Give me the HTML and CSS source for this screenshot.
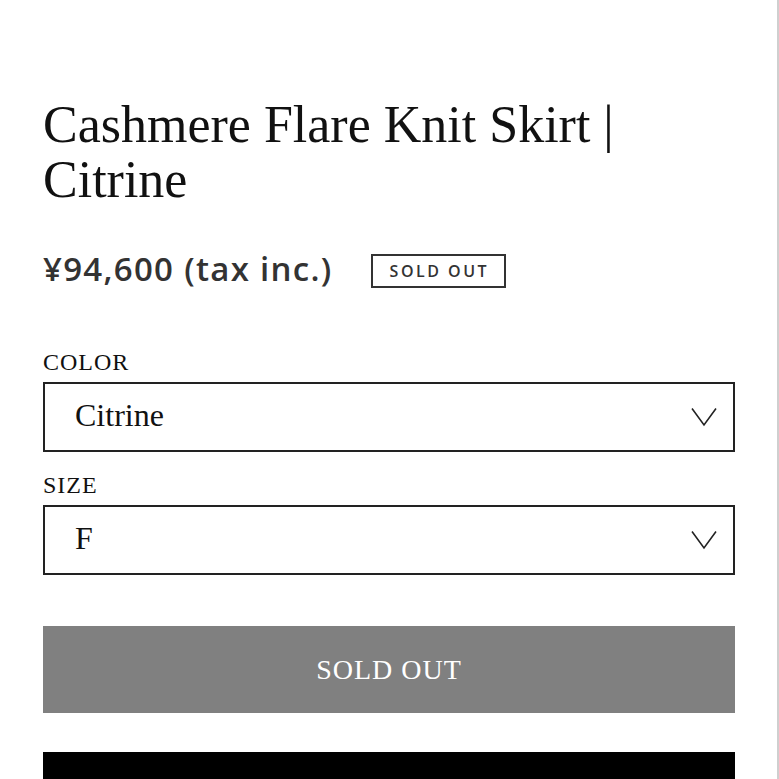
FILE: index.html
```html
<!DOCTYPE html>
<html lang="en">
<head>
  <meta charset="UTF-8" />
  <meta name="viewport" content="width=device-width, initial-scale=1.0" />
  <title>Cashmere Flare Knit Skirt | Citrine</title>
  <link rel="stylesheet" href="styles.css">
</head>
<body>
  <div class="page">
    <!-- Nome e preço -->
    <h1 class="product-title">Cashmere Flare Knit Skirt | Citrine</h1>
    <div class="price-row">
      <span class="price">¥94,600 (tax inc.)</span>
      <span class="badge">SOLD OUT</span>
    </div>

    <!-- Variações -->
    <div class="option">
      <label class="option-label">COLOR</label>
      <div class="select">
        <span class="select-value">Citrine</span>
        <svg class="chevron" width="26" height="20" viewBox="0 0 26 20"><polyline points="1,1.5 13,18 25,1.5" fill="none" stroke="#222" stroke-width="1.6"/></svg>
      </div>
    </div>
    <div class="option">
      <label class="option-label">SIZE</label>
      <div class="select">
        <span class="select-value">F</span>
        <svg class="chevron" width="26" height="20" viewBox="0 0 26 20"><polyline points="1,1.5 13,18 25,1.5" fill="none" stroke="#222" stroke-width="1.6"/></svg>
      </div>
    </div>

    <!-- Botões -->
    <button class="btn-soldout" disabled>SOLD OUT</button>
    <div class="btn-black"></div>
  </div>
</body>
</html>
```

FILE: styles.css
```css
:root {
  --text: #111;
  --muted: #333;
  --border: #222;
  --gray-button: #808080;
  --edge: #cfcfcf;
}
* { margin: 0; padding: 0; box-sizing: border-box; }
html, body { height: 100%; overflow: hidden; }
body {
  background: #fff;
  color: var(--text);
  font-family: "Liberation Serif", "Times New Roman", serif;
}
.page {
  min-height: 100%;
  border-right: 2px solid var(--edge);
  padding: 97px 42px 0 43px;
}
.product-title {
  font-size: 52px;
  font-weight: 400;
  line-height: 55px;
  padding-right: 100px;
}
.price-row {
  display: flex;
  align-items: center;
  gap: 38px;
  margin-top: 42px;
}
.price {
  font-family: "Open Sans", sans-serif;
  font-size: 33px;
  font-weight: 600;
  line-height: 40px;
  letter-spacing: 1.3px;
  color: var(--muted);
}
.badge {
  font-family: "Open Sans", sans-serif;
  font-size: 16px;
  font-weight: 600;
  letter-spacing: 2.5px;
  line-height: 30px;
  color: var(--muted);
  border: 2px solid var(--muted);
  padding: 0 15px 0 17px;
  margin-top: 4px;
}
.option { margin-top: 18px; }
.price-row + .option { margin-top: 58px; }
.option-label {
  display: block;
  font-size: 24px;
  line-height: 30px;
  letter-spacing: 1px;
  margin-bottom: 5px;
}
.select {
  height: 70px;
  border: 2px solid var(--border);
  display: flex;
  align-items: center;
  justify-content: space-between;
  padding: 0 16px 4px 30px;
}
.select-value {
  font-size: 32px;
  line-height: 1;
}
.chevron { margin-top: 4px; }
.btn-soldout {
  display: block;
  width: 100%;
  height: 87px;
  margin-top: 51px;
  background: var(--gray-button);
  border: none;
  color: #fff;
  font-family: "Liberation Serif", "Times New Roman", serif;
  font-size: 28px;
  letter-spacing: 1px;
}
.btn-black {
  height: 80px;
  margin-top: 39px;
  background: #000;
}
```
